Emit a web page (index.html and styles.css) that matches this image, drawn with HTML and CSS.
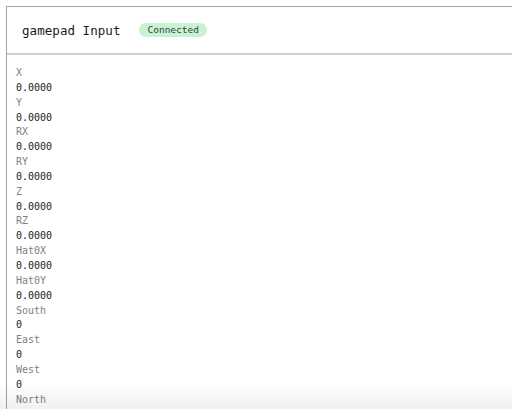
FILE: index.html
```html
<!DOCTYPE html>
<html lang="en">
<head>
    <meta charset="UTF-8">
    <meta name="viewport" content="width=device-width, initial-scale=1.0">
    <title>gamepad Input</title>
    <link rel="stylesheet" href="styles.css">
</head>
<body>
    <div class="panel">
        <div class="panel-header">
            <h2 class="panel-title">gamepad Input</h2>
            <span class="status-badge">Connected</span>
        </div>

        <div class="axis-list">
            <div class="axis-label">X</div>
            <div class="axis-value">0.0000</div>
            <div class="axis-label">Y</div>
            <div class="axis-value">0.0000</div>
            <div class="axis-label">RX</div>
            <div class="axis-value">0.0000</div>
            <div class="axis-label">RY</div>
            <div class="axis-value">0.0000</div>
            <div class="axis-label">Z</div>
            <div class="axis-value">0.0000</div>
            <div class="axis-label">RZ</div>
            <div class="axis-value">0.0000</div>
            <div class="axis-label">Hat0X</div>
            <div class="axis-value">0.0000</div>
            <div class="axis-label">Hat0Y</div>
            <div class="axis-value">0.0000</div>
            <div class="axis-label">South</div>
            <div class="axis-value">0</div>
            <div class="axis-label">East</div>
            <div class="axis-value">0</div>
            <div class="axis-label">West</div>
            <div class="axis-value">0</div>
            <div class="axis-label">North</div>
            <div class="axis-value">0</div>
        </div>
    </div>

    <!-- soft fade at the bottom edge of the scroll area -->
    <div class="bottom-fade"></div>
</body>
</html>
```

FILE: styles.css
```css
:root {
    --panel-border: #a3a3a3;
    --divider: #cfcfcf;
    --text-color: #222;
    --label-color: #808080;
    --badge-bg: #c9f2d3;
    --badge-text: #2b4a35;
}

* {
    margin: 0;
    padding: 0;
    box-sizing: border-box;
}

body {
    font-family: "DejaVu Sans Mono", "Liberation Mono", monospace;
    background-color: #fff;
    color: var(--text-color);
    padding: 6px 0 0 6px;
    height: 409px;
    overflow: hidden;
}

.panel {
    border-top: 1px solid var(--panel-border);
    border-left: 1px solid var(--panel-border);
}

.panel-header {
    display: flex;
    align-items: center;
    gap: 19px;
    height: 48px;
    padding: 0 0 0 15px;
    border-bottom: 2px solid var(--divider);
}

.panel-title {
    font-size: 12.5px;
    font-weight: normal;
    color: #1a1a1a;
    letter-spacing: 0.05px;
}

.status-badge {
    font-size: 9.5px;
    line-height: 14px;
    padding: 0 8px;
    border-radius: 7px;
    background-color: var(--badge-bg);
    color: var(--badge-text);
}

.axis-list {
    display: flex;
    flex-direction: column;
    padding: 11px 0 0 9px;
    font-size: 10px;
    line-height: 14.85px;
}

.axis-label {
    color: var(--label-color);
}

.axis-value {
    color: var(--text-color);
}

.bottom-fade {
    position: fixed;
    left: 0;
    right: 0;
    bottom: 0;
    height: 26px;
    background: linear-gradient(to bottom, rgba(0, 0, 0, 0), rgba(0, 0, 0, 0.06));
    pointer-events: none;
}
```
